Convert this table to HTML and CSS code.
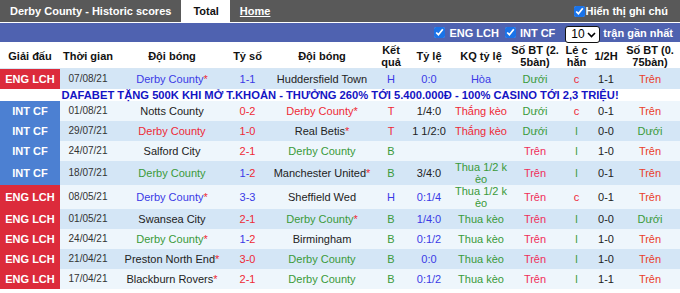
FILE: index.html
```html
<!DOCTYPE html>
<html lang="vi">
<head>
<meta charset="utf-8">
<title>Derby County - Historic scores</title>
<link rel="stylesheet" href="styles.css">
</head>
<body>
<div class="topbar">
  <span class="title">Derby County - Historic scores</span>
  <span class="tab active">Total</span>
  <span class="tab link">Home</span>
  <label class="note"><input type="checkbox" checked>Hiển thị ghi chú</label>
</div>
<div class="filterbar">
  <label class="chk"><input type="checkbox" checked>ENG LCH</label>
  <label class="chk"><input type="checkbox" checked>INT CF</label>
  <span class="selwrap">
    <select class="count"><option>10</option></select>
    <svg class="chev" width="9" height="6" viewBox="0 0 9 6"><path d="M1 1 L4.5 4.5 L8 1" fill="none" stroke="#000" stroke-width="1.6"/></svg>
  </span>
  <span class="recent">trận gần nhất</span>
</div>
<table class="scores">
  <colgroup>
    <col class="w60"><col class="w56"><col class="w112"><col class="w39"><col class="w110"><col class="w28">
    <col class="w48"><col class="w56"><col class="w52"><col class="w31"><col class="w28"><col class="w60">
  </colgroup>
  <thead>
    <tr>
      <th>Giải đấu</th><th>Thời gian</th><th>Đội bóng</th><th>Tỷ số</th><th>Đội bóng</th><th>Kết quả</th>
      <th>Tỷ lệ</th><th>KQ tỷ lệ</th><th class="tight">Số BT (2.5bàn)</th><th>Lẻ chẵn</th><th>1/2H</th><th class="wide">Số BT (0.75bàn)</th>
    </tr>
  </thead>
  <tbody>
    <tr class="dark">
      <td class="lg eng">ENG LCH</td><td class="date">07/08/21</td>
      <td class="b">Derby County<span class="r">*</span></td><td class="b">1-1</td><td>Huddersfield Town</td>
      <td class="b">H</td><td class="b">0:0</td><td class="b">Hòa</td><td class="g">Dưới</td><td class="r">c</td><td>1-1</td><td class="o">Trên</td>
    </tr>
    <tr class="ad">
      <td colspan="12">DAFABET TẶNG 500K KHI MỞ T.KHOẢN - THƯỞNG 260% TỚI 5.400.000Đ - 100% CASINO TỚI 2,3 TRIỆU!</td>
    </tr>
    <tr class="light">
      <td class="lg int">INT CF</td><td class="date">01/08/21</td>
      <td>Notts County</td><td class="r">0-2</td><td class="r">Derby County*</td>
      <td class="r">T</td><td>1/4:0</td><td class="r">Thắng kèo</td><td class="g">Dưới</td><td class="r">c</td><td>0-1</td><td class="o">Trên</td>
    </tr>
    <tr class="dark">
      <td class="lg int">INT CF</td><td class="date">29/07/21</td>
      <td class="r">Derby County</td><td class="r">1-0</td><td>Real Betis<span class="r">*</span></td>
      <td class="r">T</td><td>1 1/2:0</td><td class="r">Thắng kèo</td><td class="g">Dưới</td><td class="g">l</td><td>0-0</td><td class="g">Dưới</td>
    </tr>
    <tr class="light">
      <td class="lg int">INT CF</td><td class="date">24/07/21</td>
      <td>Salford City</td><td class="r">2-1</td><td class="g">Derby County</td>
      <td class="g">B</td><td></td><td></td><td class="p">Trên</td><td class="g">l</td><td>1-0</td><td class="o">Trên</td>
    </tr>
    <tr class="dark">
      <td class="lg int">INT CF</td><td class="date">18/07/21</td>
      <td class="g">Derby County</td><td><span class="b">1-</span><span class="r">2</span></td><td>Manchester United<span class="r">*</span></td>
      <td class="g">B</td><td>3/4:0</td><td class="g">Thua 1/2 kèo</td><td class="p">Trên</td><td class="g">l</td><td>0-1</td><td class="o">Trên</td>
    </tr>
    <tr class="light">
      <td class="lg eng">ENG LCH</td><td class="date">08/05/21</td>
      <td class="b">Derby County<span class="r">*</span></td><td class="b">3-3</td><td>Sheffield Wed</td>
      <td class="b">H</td><td class="b">0:1/4</td><td class="g">Thua 1/2 kèo</td><td class="p">Trên</td><td class="r">c</td><td>0-1</td><td class="o">Trên</td>
    </tr>
    <tr class="dark">
      <td class="lg eng">ENG LCH</td><td class="date">01/05/21</td>
      <td>Swansea City</td><td class="r">2-1</td><td class="g">Derby County<span class="r">*</span></td>
      <td class="g">B</td><td class="b">1/4:0</td><td class="g">Thua kèo</td><td class="p">Trên</td><td class="g">l</td><td>0-0</td><td class="g">Dưới</td>
    </tr>
    <tr class="light">
      <td class="lg eng">ENG LCH</td><td class="date">24/04/21</td>
      <td class="g">Derby County<span class="r">*</span></td><td><span class="b">1-</span><span class="r">2</span></td><td>Birmingham</td>
      <td class="g">B</td><td class="b">0:1/2</td><td class="g">Thua kèo</td><td class="p">Trên</td><td class="g">l</td><td>1-0</td><td class="o">Trên</td>
    </tr>
    <tr class="dark">
      <td class="lg eng">ENG LCH</td><td class="date">21/04/21</td>
      <td>Preston North End<span class="r">*</span></td><td class="r">3-0</td><td class="g">Derby County</td>
      <td class="g">B</td><td class="b">0:0</td><td class="g">Thua kèo</td><td class="p">Trên</td><td class="g">l</td><td>1-0</td><td class="o">Trên</td>
    </tr>
    <tr class="light">
      <td class="lg eng">ENG LCH</td><td class="date">17/04/21</td>
      <td>Blackburn Rovers<span class="r">*</span></td><td class="r">2-1</td><td class="g">Derby County</td>
      <td class="g">B</td><td class="b">0:1/2</td><td class="g">Thua kèo</td><td class="p">Trên</td><td class="g">l</td><td>1-1</td><td class="o">Trên</td>
    </tr>
  </tbody>
</table>
</body>
</html>
```
FILE: styles.css
```css
html, body {
  margin: 0;
  padding: 0;
  background: #fff;
  font-family: "Liberation Sans", Arial, sans-serif;
  font-size: 11px;
  color: #222;
}

.topbar {
  display: flex;
  align-items: stretch;
  height: 22px;
  background: #595959;
  color: #fff;
  font-weight: bold;
  font-size: 11px;
}
.topbar .title {
  display: flex;
  align-items: center;
  padding: 0 10px;
}
.topbar .tab {
  display: flex;
  align-items: center;
  padding: 0 10px;
}
.topbar .tab.active {
  background: #fff;
  color: #111;
  padding: 0 11px 0 12px;
}
.topbar .tab.link {
  text-decoration: underline;
}
.topbar .note {
  margin-left: auto;
  display: flex;
  align-items: center;
  padding-right: 12px;
}

input[type="checkbox"] {
  width: 11px;
  height: 11px;
  margin: 0 1px 0 0;
  accent-color: #1a73e8;
}

.filterbar {
  margin-top: 1px;
  height: 19px;
  background: #4f62b0;
  color: #fff;
  font-weight: bold;
  display: flex;
  align-items: center;
  justify-content: flex-end;
  padding-right: 7px;
  border-bottom: 1px solid #fff;
}
.filterbar .chk {
  display: flex;
  align-items: center;
  margin-right: 6px;
}
.filterbar .chk input {
  margin-right: 4px;
}
.selwrap {
  position: relative;
  display: flex;
  align-items: center;
  margin: 3px 3px 0 4px;
}
.filterbar .count {
  -webkit-appearance: none;
  appearance: none;
  height: 17px;
  width: 35px;
  font-size: 12px;
  font-family: "Liberation Sans", Arial, sans-serif;
  margin: 0;
  padding: 0 0 0 5px;
  border: 1px solid #111;
  border-radius: 3px;
  background: #fff;
  color: #000;
}
.selwrap .chev {
  position: absolute;
  right: 4px;
  top: 6px;
  pointer-events: none;
}

.scores {
  width: 680px;
  table-layout: fixed;
  border-collapse: collapse;
}
.w60 { width: 60px; }
.w56 { width: 56px; }
.w112 { width: 112px; }
.w39 { width: 39px; }
.w110 { width: 110px; }
.w28 { width: 28px; }
.w48 { width: 48px; }
.w52 { width: 52px; }
.w31 { width: 31px; }

.scores th,
.scores td {
  text-align: center;
  vertical-align: middle;
  word-break: break-all;
  line-height: 12px;
  padding: 0 2px;
}
.scores th {
  height: 25px;
  font-weight: bold;
  color: #111;
  background: #fff;
  border-bottom: 1px solid #d6e6f4;
}
.scores th.tight { padding: 0 1px; }
.scores th.wide { padding: 0 4px; }
.scores td {
  height: 20px;
  color: #222;
}
.scores tr.dark td { background: #d4e6f6; }
.scores tr.light td { background: #eef6fc; }
.scores td.lg {
  color: #fff;
  font-weight: bold;
  font-size: 11px;
}
.scores tr td.eng { background: #dc2b3b; }
.scores tr td.int { background: #4c80d2; }
.scores td.date { font-size: 10px; color: #333; }

.scores tr.ad td {
  height: 12px;
  padding: 0;
  background: #fff;
  color: #1414c4;
  font-weight: bold;
  font-size: 11.2px;
  word-break: normal;
  white-space: nowrap;
}

.scores td.b, .b { color: #3a3ae6; }
.scores td.r, .r { color: #ee2a36; }
.scores td.g, .g { color: #3a9a3a; }
.scores td.p, .p { color: #f02f5a; }
.scores td.o, .o { color: #e9402a; }
```
